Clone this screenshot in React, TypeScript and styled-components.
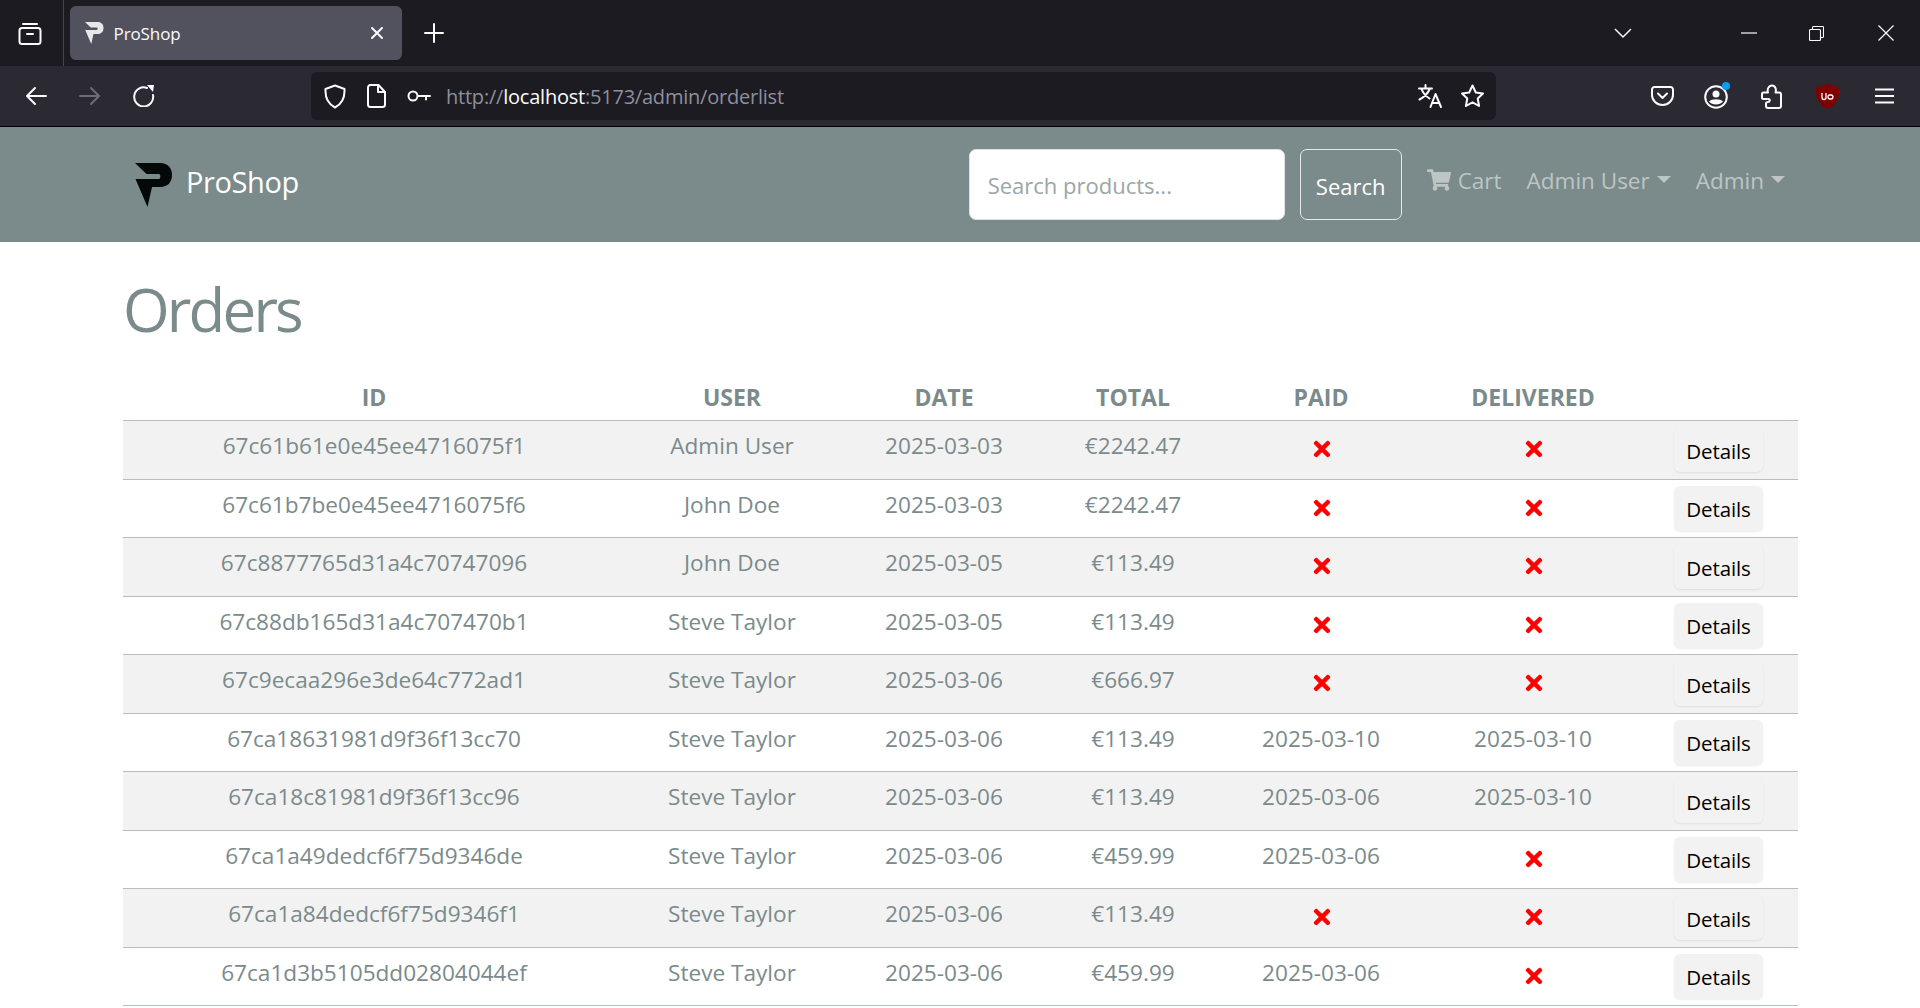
import { createGlobalStyle, styled } from 'styled-components';
import { FaShoppingCart, FaTimes } from 'react-icons/fa';

const GlobalStyle = createGlobalStyle`
  html, body {
    margin: 0;
    height: 100%;
    overflow: hidden;
    background: #fff;
    font-family: "Open Sans", "Noto Sans", sans-serif;
    color: #7b8a8b;
  }
  * { box-sizing: border-box; }
`;

const TabBar = styled.div`
  height: 66px;
  background: #1c1b22;
  display: flex;
  align-items: center;
  color: #fbfbfe;
`;
const ViewSlot = styled.div`
  width: 64px;
  height: 66px;
  padding-left: 18px;
  border-right: 1px solid #45454c;
  display: flex;
  align-items: center;
`;
const Tab = styled.div`
  width: 332px;
  height: 54px;
  margin-left: 6px;
  padding: 0 18px 0 15px;
  border-radius: 6px;
  background: #52525e;
  display: flex;
  align-items: center;
  font-size: 17px;
  letter-spacing: -0.1px;
`;
const TabTitle = styled.span`
  margin-left: 10px;
  flex: 1;
`;
const NewTab = styled.div`
  margin-left: 22px;
  display: flex;
`;
const WindowControls = styled.div`
  margin-left: auto;
  display: flex;
  align-items: center;
`;
const ControlSlot = styled.div<{ $width: number }>`
  width: ${(p) => p.$width}px;
  display: flex;
  justify-content: flex-start;
`;

const Toolbar = styled.div`
  height: 61px;
  background: #2b2a33;
  border-bottom: 1px solid #000;
  display: flex;
  align-items: center;
  color: #fbfbfe;
`;
const NavButtons = styled.div`
  width: 311px;
  padding-left: 25px;
  display: flex;
  align-items: center;
  gap: 32px;
`;
const UrlBar = styled.div`
  width: 1185px;
  height: 48px;
  padding: 0 11px 0 13px;
  border-radius: 6px;
  background: #1c1b22;
  display: flex;
  align-items: center;
`;
const UrlIcons = styled.div`
  display: flex;
  align-items: center;
  gap: 21px;
`;
const UrlText = styled.div`
  margin-left: 15px;
  flex: 1;
  font-size: 20px;
  letter-spacing: -0.22px;
  color: #8f8f9d;
  b {
    font-weight: 400;
    color: #fbfbfe;
  }
`;
const UrlActions = styled.div`
  display: flex;
  align-items: center;
  gap: 17px;
`;
const ToolIcons = styled.div`
  margin-left: 155px;
  display: flex;
  align-items: center;
`;
const ToolSlot = styled.div<{ $width: number }>`
  width: ${(p) => p.$width}px;
  display: flex;
`;

const Navbar = styled.nav`
  height: 115px;
  background: #7b8a8b;
  padding: 0 135px;
  display: flex;
  align-items: center;
`;
const Brand = styled.a`
  display: flex;
  align-items: center;
  gap: 14px;
  color: #fff;
  font-size: 29px;
  letter-spacing: -0.4px;
`;
const BrandName = styled.span`
  padding-bottom: 7px;
`;
const SearchForm = styled.form`
  margin-left: auto;
  display: flex;
  gap: 15px;
`;
const SearchInput = styled.input`
  width: 316px;
  height: 71px;
  padding: 1px 18px 0;
  border: 1px solid #dee2e6;
  border-radius: 7px;
  background: #fff;
  font: inherit;
  font-size: 22px;
  &::placeholder {
    color: #9ba6a7;
    opacity: 1;
  }
`;
const SearchButton = styled.button`
  width: 102px;
  height: 71px;
  padding: 2px 0 0;
  border: 1px solid #e6eaea;
  border-radius: 7px;
  background: transparent;
  color: #fff;
  font: inherit;
  font-size: 22px;
`;
const NavLinks = styled.div`
  margin-left: 25px;
  margin-bottom: 9px;
  display: flex;
  align-items: center;
  gap: 25px;
`;
const NavLink = styled.a<{ $caret?: boolean }>`
  display: flex;
  align-items: center;
  font-size: 22.5px;
  color: #bdc5c5;
  gap: 7px;
  ${(p) =>
    p.$caret &&
    `&::after {
      content: '';
      margin-top: -2px;
      border-top: 7px solid #bdc5c5;
      border-left: 7px solid transparent;
      border-right: 7px solid transparent;
    }`}
`;

const Content = styled.main`
  padding: 0 122px 0 123px;
`;
const Title = styled.h1`
  margin: 0;
  padding: 22px 0 0 0;
  height: 140px;
  font-size: 60px;
  font-weight: 400;
  line-height: 90px;
  letter-spacing: -2.8px;
`;
const OrdersTable = styled.table`
  width: 100%;
  border-collapse: collapse;
  table-layout: fixed;
  text-align: center;
`;
const HeadCell = styled.th`
  padding: 0 0 8px;
  font-size: 23px;
  line-height: 30px;
  font-weight: 700;
  border-bottom: 1px solid #b4bfc0;
`;
const Row = styled.tr`
  height: 58.5px;
  border-bottom: 1px solid #b4bfc0;
  &:nth-child(odd) {
    background: #f2f2f2;
  }
`;
const Cell = styled.td`
  padding: 8px 0 0;
  vertical-align: top;
  font-size: 22.6px;
  line-height: 34px;
`;
const IconCell = styled(Cell)`
  padding: 12px 0 0 2px;
`;
const CrossIcon = styled(FaTimes)`
  display: block;
  width: 18px;
  height: 24px;
  margin: 4px auto 0;
  color: #f00;
`;
const ButtonCell = styled(Cell)`
  padding: 6px 0 0 33px;
  text-align: left;
`;
const DetailsButton = styled.button`
  display: block;
  width: 89px;
  height: 45px;
  padding: 2px 0 0;
  border: none;
  border-radius: 6px;
  background: #f2f2f2;
  box-shadow: 0 1px 2px rgba(0, 0, 0, 0.08);
  color: #000;
  font: inherit;
  font-size: 20.5px;
  letter-spacing: -0.1px;
  line-height: 30px;
`;

const stroke = {
  fill: 'none',
  stroke: 'currentColor',
  strokeWidth: 2,
  strokeLinecap: 'round',
  strokeLinejoin: 'round',
} as const;

function FirefoxView() {
  return (
    <svg width="24" height="24" viewBox="0 0 24 24" {...stroke}>
      <path d="M5 3h14" />
      <rect x="1.5" y="7" width="21" height="16" rx="2.5" />
      <path d="M9 13h6" />
    </svg>
  );
}

function LogoMark({ size, color }: { size: number; color: string }) {
  return (
    <svg width={(size * 37) / 44} height={size} viewBox="0 0 37 44" fill={color}>
      <path d="M0 0H25C33 0 37 5 37 12S33 24 25 24H17L12.500 44L0.500 16H24C25.800 16 25.800 11 24 11H11.500Z" />
    </svg>
  );
}

function Arrow({ flip, color }: { flip?: boolean; color?: string }) {
  return (
    <svg
      width="22"
      height="20"
      viewBox="0 0 22 20"
      {...stroke}
      color={color}
      style={flip ? { transform: 'scaleX(-1)' } : undefined}
    >
      <path d="M21 10H2M10 2l-8 8 8 8" />
    </svg>
  );
}

function Reload() {
  return (
    <svg width="22" height="22" viewBox="0 0 22 22" fill="none" stroke="currentColor" strokeWidth="2">
      <path d="M14 3a9.500 9.500 0 1 0 6 7" strokeLinecap="round" />
      <path d="M14 0l7 0-1 7z" fill="currentColor" stroke="none" />
    </svg>
  );
}

export default function App() {
  const orders = [
    ['67c61b61e0e45ee4716075f1', 'Admin User', '2025-03-03', '€2242.47', '', ''],
    ['67c61b7be0e45ee4716075f6', 'John Doe', '2025-03-03', '€2242.47', '', ''],
    ['67c8877765d31a4c70747096', 'John Doe', '2025-03-05', '€113.49', '', ''],
    ['67c88db165d31a4c707470b1', 'Steve Taylor', '2025-03-05', '€113.49', '', ''],
    ['67c9ecaa296e3de64c772ad1', 'Steve Taylor', '2025-03-06', '€666.97', '', ''],
    ['67ca18631981d9f36f13cc70', 'Steve Taylor', '2025-03-06', '€113.49', '2025-03-10', '2025-03-10'],
    ['67ca18c81981d9f36f13cc96', 'Steve Taylor', '2025-03-06', '€113.49', '2025-03-06', '2025-03-10'],
    ['67ca1a49dedcf6f75d9346de', 'Steve Taylor', '2025-03-06', '€459.99', '2025-03-06', ''],
    ['67ca1a84dedcf6f75d9346f1', 'Steve Taylor', '2025-03-06', '€113.49', '', ''],
    ['67ca1d3b5105dd02804044ef', 'Steve Taylor', '2025-03-06', '€459.99', '2025-03-06', ''],
  ];
  const columns = [502, 214, 210, 168, 208, 216, 157];

  return (
    <>
      <GlobalStyle />
      <TabBar>
        <ViewSlot>
          <FirefoxView />
        </ViewSlot>
        <Tab>
          <LogoMark size={22} color="#e8e8ea" />
          <TabTitle>ProShop</TabTitle>
          <svg width="14" height="14" viewBox="0 0 14 14" {...stroke}>
            <path d="M2 2l10 10M12 2L2 12" />
          </svg>
        </Tab>
        <NewTab>
          <svg width="20" height="20" viewBox="0 0 20 20" {...stroke}>
            <path d="M10 1v18M1 10h18" />
          </svg>
        </NewTab>
        <WindowControls>
          <ControlSlot $width={127}>
            <svg width="18" height="11" viewBox="0 0 18 11" fill="none" stroke="currentColor" strokeWidth="1.500">
              <path d="M1 1l8 8 8-8" />
            </svg>
          </ControlSlot>
          <ControlSlot $width={68}>
            <svg width="16" height="2" viewBox="0 0 16 2" stroke="currentColor" strokeWidth="1.200">
              <path d="M0 1h16" />
            </svg>
          </ControlSlot>
          <ControlSlot $width={69}>
            <svg width="15" height="15" viewBox="0 0 15 15" fill="none" stroke="currentColor" strokeWidth="1.100">
              <rect x="0.500" y="3.500" width="11" height="11" rx="1" />
              <path d="M3.500 3.500V1.500a1 1 0 0 1 1-1h9a1 1 0 0 1 1 1v9a1 1 0 0 1-1 1h-2" />
            </svg>
          </ControlSlot>
          <ControlSlot $width={42}>
            <svg width="16" height="16" viewBox="0 0 16 16" fill="none" stroke="currentColor" strokeWidth="1.200">
              <path d="M0.500 0.500l15 15M15.500 0.500l-15 15" />
            </svg>
          </ControlSlot>
        </WindowControls>
      </TabBar>
      <Toolbar>
        <NavButtons>
          <Arrow />
          <Arrow flip color="#6d6d75" />
          <Reload />
        </NavButtons>
        <UrlBar>
          <UrlIcons>
            <svg width="22" height="25" viewBox="0 0 22 25" {...stroke}>
              <path d="M11 1.500l9.500 3.500c.5 9-2.500 15-9.500 18.500C4 20 1 14 1.500 5z" />
            </svg>
            <svg width="19" height="24" viewBox="0 0 19 24" {...stroke}>
              <path d="M3 1h8.500L18 8v12.500a2.500 2.500 0 0 1-2.500 2.500h-12A2.500 2.500 0 0 1 1 20.500v-17A2.500 2.500 0 0 1 3.500 1z" />
              <path d="M11 1v7h7" />
            </svg>
            <svg width="24" height="14" viewBox="0 0 24 14" {...stroke}>
              <circle cx="6" cy="7" r="4.500" />
              <path d="M11 7h12M19 7v3.500" />
            </svg>
          </UrlIcons>
          <UrlText>
            http://<b>localhost</b>:5173/admin/orderlist
          </UrlText>
          <UrlActions>
            <svg width="25" height="24" viewBox="0 0 25 24" {...stroke}>
              <path d="M1 4.500h13M7.500 1v3.500M12 4.500C10 9 6.500 13 1.500 15.500M3.500 5c1.500 4 4 7 8 9.500M12.500 23l5-13 5.500 13M14.500 19h7" />
            </svg>
            <svg width="25" height="24" viewBox="0 0 25 24" {...stroke}>
              <path d="M12.500 1.500l3.300 7 7.200 1-5.300 5 1.400 7.500-6.600-3.700L5.900 22l1.400-7.500L2 9.500l7.200-1z" />
            </svg>
          </UrlActions>
        </UrlBar>
        <ToolIcons>
          <ToolSlot $width={53}>
            <svg width="23" height="20" viewBox="0 0 23 20" {...stroke}>
              <path d="M3.500 1h16A2.500 2.500 0 0 1 22 3.500V9a10.500 10 0 0 1-21 0V3.500A2.500 2.500 0 0 1 3.500 1z" />
              <path d="M7 7.500l4.500 4.500L16 7.500" />
            </svg>
          </ToolSlot>
          <ToolSlot $width={57}>
            <svg width="26" height="28" viewBox="0 0 26 28">
              <circle cx="12" cy="15" r="10.800" fill="none" stroke="currentColor" strokeWidth="2" />
              <circle cx="12" cy="12" r="3.500" fill="currentColor" />
              <path d="M5 19.500c3-3 11-3 14 0-3 4-11 4-14 0z" fill="currentColor" />
              <circle cx="22" cy="4" r="4" fill="#0a9df5" />
            </svg>
          </ToolSlot>
          <ToolSlot $width={55}>
            <svg width="21" height="25" viewBox="0 0 21 25" {...stroke}>
              <path d="M7 8.500H2.500c-.8 0-1.500.7-1.500 1.500v3.500c0 .8.700 1.500 1.500 1.500H6M7 8.500c-1-3 .5-7 4-7s4.500 4 3.500 7H18c1.200 0 2 .8 2 2V22c0 1-.8 2-2 2H7c-1 0-2-1-2-2v-2.500c0-1 1-1.500 2-1.500 2 0 2.500-3 .5-3" />
            </svg>
          </ToolSlot>
          <ToolSlot $width={59}>
            <svg width="23" height="25" viewBox="0 0 23 25">
              <path d="M11.500 0L23 3.500c.5 10-2.500 17-11.500 21.500C2.500 20.500-.5 13.500 0 3.500z" fill="#800000" />
              <path d="M6 9v4.500a2 2 0 0 0 4 0V9M13 11h2a2 2 0 0 1 2 2 2 2 0 0 1-2 2h-1a2 2 0 0 1-2-2 2 2 0 0 1 1-2z" fill="none" stroke="#fff" strokeWidth="1.300" />
            </svg>
          </ToolSlot>
          <ToolSlot $width={19}>
            <svg width="19" height="16" viewBox="0 0 19 16" stroke="currentColor" strokeWidth="2">
              <path d="M0 1.500h19M0 8h19M0 14.500h19" />
            </svg>
          </ToolSlot>
        </ToolIcons>
      </Toolbar>
      <Navbar>
        <Brand>
          <LogoMark size={44} color="#050808" />
          <BrandName>ProShop</BrandName>
        </Brand>
        <SearchForm>
          <SearchInput placeholder="Search products..." />
          <SearchButton type="button">Search</SearchButton>
        </SearchForm>
        <NavLinks>
          <NavLink>
            <FaShoppingCart size={24} />
            Cart
          </NavLink>
          <NavLink $caret>Admin User</NavLink>
          <NavLink $caret>Admin</NavLink>
        </NavLinks>
      </Navbar>
      <Content>
        <Title>Orders</Title>
        <OrdersTable>
          <colgroup>
            {columns.map((width, i) => (
              <col key={i} width={width} />
            ))}
          </colgroup>
          <thead>
            <tr>
              {['ID', 'USER', 'DATE', 'TOTAL', 'PAID', 'DELIVERED', ''].map((label, i) => (
                <HeadCell key={i}>{label}</HeadCell>
              ))}
            </tr>
          </thead>
          <tbody>
            {orders.map((order) => (
              <Row key={order[0]}>
                {order.map((value, i) =>
                  value ? (
                    <Cell key={i}>{value}</Cell>
                  ) : (
                    <IconCell key={i}>
                      <CrossIcon />
                    </IconCell>
                  )
                )}
                <ButtonCell>
                  <DetailsButton type="button">Details</DetailsButton>
                </ButtonCell>
              </Row>
            ))}
          </tbody>
        </OrdersTable>
      </Content>
    </>
  );
}
